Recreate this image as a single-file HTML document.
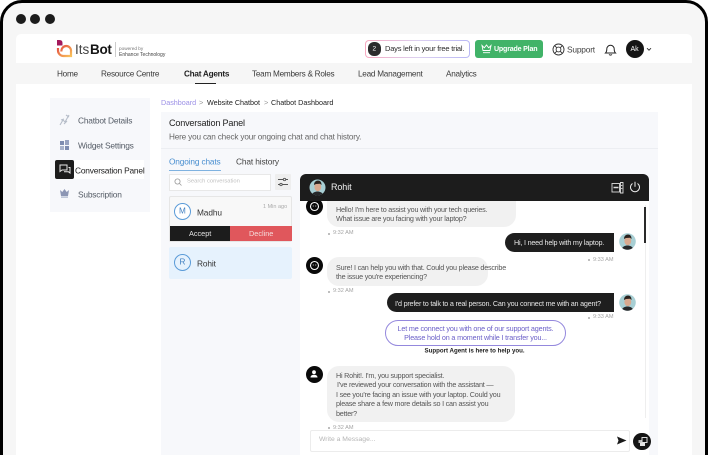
<!DOCTYPE html>
<html>
<head>
<meta charset="utf-8">
<style>
html,body{margin:0;padding:0;background:#fff;width:708px;height:455px;overflow:hidden}
#wrap{position:relative;width:708px;height:455px;overflow:hidden;font-family:"Liberation Sans",sans-serif;color:#222;filter:blur(.25px)}
.a{position:absolute}
.t{position:absolute;white-space:nowrap;line-height:1;transform:translateY(calc(-50% + .6px))}
#frame{left:0;top:0;width:702px;height:470px;border:3px solid #000;border-radius:22px;background:#f6f6f6}
.dot{width:10px;height:10px;border-radius:50%;background:#1c1c1c;top:14px}
.nav{font-size:8.2px;letter-spacing:-.25px;color:#3a3a3a;top:74px}
.side{font-size:8.4px;letter-spacing:-.2px;color:#555c66}
.msg{font-size:7.2px;letter-spacing:-.2px;color:#555}
.time{font-size:5.6px;color:#a5a5a5}
.tdot{width:2px;height:2px;border-radius:50%;background:#aaa}
</style>
</head>
<body>
<div id="wrap">
<div class="a" id="frame"></div>
<div class="a dot" style="left:16px"></div>
<div class="a dot" style="left:30px"></div>
<div class="a dot" style="left:45px"></div>

<div class="a" style="left:16px;top:34px;width:676px;height:421px;background:#fff;border-radius:5px 5px 0 0"></div>
<div class="a" style="left:16px;top:63px;width:676px;height:21px;background:#f6f6f6"></div>

<!-- logo -->
<svg class="a" style="left:56px;top:39px" width="17" height="19" viewBox="0 0 17 19">
<defs><linearGradient id="lg" x1="0" y1="0" x2="1" y2="1"><stop offset="0" stop-color="#e2483f"/><stop offset="1" stop-color="#f9c25a"/></linearGradient></defs>
<path d="M1 1h2.500q3 0 3 3v2.500H1z" fill="#a3195b"/>
<path d="M2 9v2.500a5.500 5.500 0 0 0 5.500 5.500H15V12.500a4.800 4.800 0 1 0-9.500 0" fill="none" stroke="url(#lg)" stroke-width="2.200"/>
</svg>
<div class="t" style="left:75px;top:49px;font-size:13.500px;color:#444">Its</div>
<div class="t" style="left:90px;top:49px;font-size:13.500px;color:#151515;font-weight:bold;letter-spacing:-.3px">Bot</div>
<div class="a" style="left:115px;top:42px;width:1px;height:15px;background:#ccc"></div>
<div class="t" style="left:119px;top:49px;font-size:4.700px;color:#777">powered by</div>
<div class="t" style="left:119px;top:55px;font-size:5px;color:#444">Enhance Technology</div>

<!-- trial -->
<div class="a" style="left:365px;top:40px;width:105px;height:18px;border-radius:4px;background:linear-gradient(90deg,#f7a8bf,#dcd0f0,#b9b8f5)"></div>
<div class="a" style="left:366px;top:41px;width:103px;height:16px;border-radius:3px;background:#fff"></div>
<div class="a" style="left:368px;top:42px;width:13px;height:14px;border-radius:6px;background:#2c2c2c"></div>
<div class="t" style="left:372.500px;top:48.500px;font-size:6.500px;color:#fff">2</div>
<div class="t" style="left:385px;top:48px;font-size:7.500px;letter-spacing:-.2px;color:#2b2b2b">Days left in your free trial.</div>

<!-- upgrade -->
<div class="a" style="left:475px;top:40px;width:68px;height:18px;border-radius:3px;background:#41b368"></div>
<svg class="a" style="left:481px;top:44px" width="11" height="10" viewBox="0 0 11 10" fill="none" stroke="#fff" stroke-width=".9"><path d="M1 1.500l2.300 2.300L5.500 1l2.200 2.800L10 1.500 9 6.500H2zM2 8.700h7"/></svg>
<div class="t" style="left:494px;top:48.500px;font-size:7.100px;letter-spacing:-.2px;color:#fff;font-weight:bold">Upgrade Plan</div>

<!-- support -->
<svg class="a" style="left:552px;top:43px" width="13" height="13" viewBox="0 0 13 13" fill="none" stroke="#333" stroke-width=".9"><circle cx="6.500" cy="6.500" r="5.500"/><circle cx="6.500" cy="6.500" r="2.400"/><path d="M2.600 2.600l2.200 2.200M10.400 2.600L8.200 4.800M2.600 10.400l2.200-2.200M10.400 10.400L8.200 8.200"/></svg>
<div class="t" style="left:567px;top:48.500px;font-size:8.400px;letter-spacing:-.2px;color:#444">Support</div>
<svg class="a" style="left:604px;top:43px" width="13" height="13" viewBox="0 0 13 13" fill="none" stroke="#222" stroke-width="1"><path d="M1.500 10h10c-1-1-1.300-2-1.300-4A3.700 3.700 0 0 0 2.800 6c0 2-.3 3-1.300 4zM5 11.500q1.500 1.200 3 0"/></svg>
<div class="a" style="left:626px;top:40px;width:18px;height:18px;border-radius:50%;background:#151515"></div>
<div class="t" style="left:630.500px;top:48.500px;font-size:7px;color:#fff">Ak</div>
<svg class="a" style="left:646px;top:47px" width="6" height="5" viewBox="0 0 6 5" fill="none" stroke="#333" stroke-width=".9"><path d="M1 1.200l2 2 2-2"/></svg>

<!-- nav -->
<div class="t nav" style="left:57px">Home</div>
<div class="t nav" style="left:101px">Resource Centre</div>
<div class="t nav" style="left:184px;color:#222;font-weight:bold;letter-spacing:-.25px">Chat Agents</div>
<div class="a" style="left:195px;top:83px;width:21px;height:1px;background:#222"></div>
<div class="t nav" style="left:252px">Team Members &amp; Roles</div>
<div class="t nav" style="left:358px">Lead Management</div>
<div class="t nav" style="left:446px">Analytics</div>

<!-- sidebar -->
<div class="a" style="left:50px;top:98px;width:100px;height:114px;background:#f7f8fb"></div>
<svg class="a" style="left:58px;top:113px" width="13" height="14" viewBox="0 0 13 14" fill="none" stroke="#b6bdc9" stroke-width="1.100"><path d="M2 12l3-5 2 2 4-7M3 7l3-1M8 2l3 2M6 11l3-3"/></svg>
<div class="t side" style="left:78px;top:120px">Chatbot Details</div>
<svg class="a" style="left:60px;top:140px" width="9" height="10" viewBox="0 0 9 10"><rect x="0" y="1" width="4" height="4" fill="#7f8db0"/><rect x="5" y="0" width="4" height="5" fill="#98a3c0"/><rect x="0" y="6" width="4" height="4" fill="#a9b3cb"/><rect x="5" y="6" width="4" height="4" fill="#7f8db0"/></svg>
<div class="t side" style="left:78px;top:145px">Widget Settings</div>
<div class="a" style="left:74px;top:160px;width:70px;height:19px;background:#fff"></div>
<div class="a" style="left:55px;top:160px;width:19px;height:18.500px;background:#1c1c1c;border-radius:2px"></div>
<svg class="a" style="left:59px;top:164px" width="12" height="11" viewBox="0 0 12 11" fill="none" stroke="#e8e8e8" stroke-width="1"><path d="M1 1h7v5H3L1 7.500zM9.500 3.500H11v5.500l-1.500-1.200H5"/></svg>
<div class="t" style="left:75px;top:169.500px;font-size:8.400px;letter-spacing:-.2px;color:#222">Conversation Panel</div>
<svg class="a" style="left:60px;top:189px" width="9" height="9" viewBox="0 0 9 9"><path d="M0 1l2.300 2L4.500 0l2.200 3L9 1 8 7H1z" fill="#8c96b4"/><rect x="1" y="7.500" width="7" height="1.200" fill="#a9b3cb"/></svg>
<div class="t side" style="left:78px;top:194px">Subscription</div>

<!-- breadcrumb -->
<div class="t" style="left:161px;top:102px;font-size:7.200px;color:#9c90e6">Dashboard</div>
<div class="t" style="left:199px;top:102px;font-size:7.500px;color:#999">&gt;</div>
<div class="t" style="left:207px;top:102px;font-size:7.200px;color:#222">Website Chatbot</div>
<div class="t" style="left:264px;top:102px;font-size:7.500px;color:#999">&gt;</div>
<div class="t" style="left:271px;top:102px;font-size:7.200px;color:#222">Chatbot Dashboard</div>

<!-- main panel -->
<div class="a" style="left:161px;top:112px;width:497px;height:343px;background:#f7f8fb"></div>
<div class="a" style="left:161px;top:148px;width:497px;height:1px;background:#eceef2"></div>
<div class="t" style="left:169px;top:123px;font-size:9.100px;letter-spacing:-.2px;color:#222">Conversation Panel</div>
<div class="t" style="left:169px;top:137px;font-size:8.200px;letter-spacing:-.17px;color:#666">Here you can check your ongoing chat and chat history.</div>
<div class="t" style="left:169px;top:161px;font-size:8.300px;letter-spacing:-.15px;color:#4a8fd0">Ongoing chats</div>
<div class="a" style="left:169px;top:170px;width:52px;height:1px;background:#7fb2e0"></div>
<div class="t" style="left:236px;top:161px;font-size:8.400px;letter-spacing:-.15px;color:#444">Chat history</div>

<!-- search -->
<div class="a" style="left:169px;top:174px;width:100px;height:15px;background:#fff;border:1px solid #e8e8e8"></div>
<svg class="a" style="left:174px;top:178px" width="8" height="8" viewBox="0 0 8 8" fill="none" stroke="#999" stroke-width=".8"><circle cx="3.500" cy="3.500" r="2.600"/><path d="M5.500 5.500L7.500 7.500"/></svg>
<div class="t" style="left:187px;top:181.500px;font-size:5.800px;color:#c0c0c0">Search conversation</div>
<div class="a" style="left:275px;top:174px;width:16px;height:16px;background:#eeeeee;border-radius:1px"></div>
<svg class="a" style="left:277px;top:177px" width="12" height="10" viewBox="0 0 12 10" fill="none" stroke="#555" stroke-width=".9"><path d="M1 2.500h10M1 7.500h10"/><circle cx="7.500" cy="2.500" r="1.200" fill="#eee"/><circle cx="4" cy="7.500" r="1.200" fill="#eee"/></svg>

<!-- Madhu -->
<div class="a" style="left:169px;top:196px;width:121px;height:44px;background:#f8f8f8;border:1px solid #e6e6e6;border-radius:2px"></div>
<div class="a" style="left:174px;top:203px;width:15px;height:15px;border:1px solid #5a9bd8;border-radius:50%;background:#fff"></div>
<div class="t" style="left:179px;top:211px;font-size:8.200px;color:#3f7fc0">M</div>
<div class="t" style="left:197px;top:212px;font-size:8.300px;letter-spacing:-.1px;color:#333">Madhu</div>
<div class="t" style="left:263px;top:206.500px;font-size:5.500px;color:#aaa">1 Min ago</div>
<div class="a" style="left:170px;top:226px;width:60px;height:14.500px;background:#1c1c1c"></div>
<div class="a" style="left:230px;top:226px;width:61.500px;height:14.500px;background:#e0575c"></div>
<div class="t" style="left:189px;top:233px;font-size:7.300px;color:#e4e4e4">Accept</div>
<div class="t" style="left:249px;top:233px;font-size:7.300px;color:#f5dcdc">Decline</div>

<!-- Rohit -->
<div class="a" style="left:169px;top:247px;width:123px;height:32px;background:#e6f2fd;border-radius:2px"></div>
<div class="a" style="left:174px;top:254px;width:15px;height:15px;border:1px solid #5a9bd8;border-radius:50%"></div>
<div class="t" style="left:179.500px;top:261.500px;font-size:8.200px;color:#3f7fc0">R</div>
<div class="t" style="left:197px;top:262.500px;font-size:8.300px;letter-spacing:-.1px;color:#333">Rohit</div>

<!-- chat -->
<div class="a" style="left:300px;top:174px;width:349px;height:281px;background:#fff;border-radius:6px 6px 0 0;overflow:hidden">
  <div class="a" style="left:344.500px;top:31px;width:1.500px;height:213px;background:#eeeeee"></div>
  <div class="a" style="left:344px;top:33px;width:2px;height:36px;background:#2a2a2a"></div>

  <!-- bot 1 -->
  <div class="a" style="left:27px;top:18px;width:189px;height:35px;background:#f1f1f1;border-radius:0 0 12px 12px"></div>
  <div class="t msg" style="left:36px;top:34.500px">Hello! I'm here to assist you with your tech queries.</div>
  <div class="t msg" style="left:36px;top:43.500px">What issue are you facing with your laptop?</div>
  <svg class="a" style="left:5.500px;top:24px" width="17" height="17" viewBox="0 0 17 17"><circle cx="8.500" cy="8.500" r="8.500" fill="#0a0a0a"/><circle cx="8.500" cy="8.500" r="4" fill="none" stroke="#fff" stroke-width="1.100"/><path d="M6.800 8h.8M9.400 8h.8" stroke="#fff" stroke-width=".9"/></svg>
  <div class="a tdot" style="left:28px;top:58.500px"></div>
  <div class="t time" style="left:33px;top:59px">9:32 AM</div>

  <!-- user 1 -->
  <div class="a" style="left:205px;top:59px;width:109px;height:19px;background:#1e1e1e;border-radius:10px 0 0 10px"></div>
  <div class="t msg" style="left:214px;top:68px;color:#e6e6e6">Hi, I need help with my laptop.</div>
  <div class="a tdot" style="left:288px;top:85px"></div>
  <div class="t time" style="left:293px;top:85.500px">9:33 AM</div>

  <!-- bot 2 -->
  <div class="a" style="left:27px;top:83px;width:161px;height:29px;background:#f1f1f1;border-radius:12px"></div>
  <div class="t msg" style="left:36px;top:93px">Sure! I can help you with that. Could you please describe</div>
  <div class="t msg" style="left:36px;top:102px">the issue you're experiencing?</div>
  <svg class="a" style="left:5.500px;top:83px" width="17" height="17" viewBox="0 0 17 17"><circle cx="8.500" cy="8.500" r="8.500" fill="#0a0a0a"/><circle cx="8.500" cy="8.500" r="4" fill="none" stroke="#fff" stroke-width="1.100"/><path d="M6.800 8h.8M9.400 8h.8" stroke="#fff" stroke-width=".9"/></svg>
  <div class="a tdot" style="left:28px;top:116.500px"></div>
  <div class="t time" style="left:33px;top:117px">9:32 AM</div>

  <!-- user 2 -->
  <div class="a" style="left:87px;top:119px;width:227px;height:19px;background:#1e1e1e;border-radius:10px 0 0 10px"></div>
  <div class="t msg" style="left:95px;top:128.500px;color:#e6e6e6">I'd prefer to talk to a real person. Can you connect me with an agent?</div>
  <div class="a tdot" style="left:288px;top:142.500px"></div>
  <div class="t time" style="left:293px;top:143px">9:33 AM</div>

  <!-- purple -->
  <div class="a" style="left:85px;top:146px;width:179px;height:23.500px;border:1px solid #9488dd;border-radius:13px"></div>
  <div class="t" style="left:85px;width:181px;text-align:center;top:154px;font-size:7.200px;letter-spacing:-.15px;color:#6b60c8">Let me connect you with one of our support agents.</div>
  <div class="t" style="left:85px;width:181px;text-align:center;top:163px;font-size:7.200px;letter-spacing:-.15px;color:#6b60c8">Please hold on a moment while I transfer you...</div>
  <div class="t" style="left:124.500px;top:177px;font-size:6.150px;font-weight:bold;color:#1c1c1c">Support Agent is here to help you.</div>

  <!-- agent -->
  <div class="a" style="left:27px;top:192px;width:188px;height:56px;background:#f1f1f1;border-radius:12px"></div>
  <div class="a" style="left:5.500px;top:191.500px;width:17px;height:17px;border-radius:50%;background:#0a0a0a"></div>
  <svg class="a" style="left:9px;top:195px" width="10" height="10" viewBox="0 0 10 10" fill="#fff"><circle cx="5" cy="3.200" r="1.900"/><path d="M1.500 8.500c0-2 1.700-2.800 3.500-2.800s3.500.8 3.500 2.800z"/></svg>
  <div class="t msg" style="left:36px;top:201px">Hi Rohit!. I'm, you support specialist.</div>
  <div class="t msg" style="left:37px;top:210px">I've reviewed your conversation with the assistant —</div>
  <div class="t msg" style="left:36px;top:220px">I see you're facing an issue with your laptop. Could you</div>
  <div class="t msg" style="left:36px;top:229px">please share a few more details so I can assist you</div>
  <div class="t msg" style="left:36px;top:238.500px">better?</div>
  <div class="a tdot" style="left:28px;top:253px"></div>
  <div class="t time" style="left:33px;top:253.500px">9:32 AM</div>

  <!-- input -->
  <div class="a" style="left:0;top:256px;width:349px;height:25px;background:#fff"></div>
  <div class="a" style="left:10px;top:256px;width:318px;height:20px;background:#fff;border:1px solid #ececec;border-radius:2px"></div>
  <div class="t" style="left:19px;top:266px;font-size:6.800px;color:#b5b5b5">Write a Message...</div>
  <svg class="a" style="left:316px;top:262px" width="11" height="9" viewBox="0 0 11 9"><path d="M1 0.500L10.500 4.500 1 8.500 2.500 4.500z" fill="#1a1a1a"/></svg>
</div>

<!-- attach button -->
<div class="a" style="left:633px;top:432.500px;width:17.500px;height:17.500px;border-radius:50%;background:#151515"></div>
<svg class="a" style="left:636.500px;top:436px" width="11" height="11" viewBox="0 0 11 11"><rect x="5" y="1.500" width="5" height="5" fill="none" stroke="#ddd" stroke-width="1"/><rect x="1.500" y="4" width="3" height="3" fill="#bbb"/><rect x="3" y="6.500" width="5" height="3.500" fill="#e5e5e5"/></svg>

<!-- header of chat -->
<div class="a" style="left:300px;top:174px;width:349px;height:27px;background:#1c1c1c;border-radius:6px 6px 0 0"></div>
<svg class="a" style="left:309px;top:179px" width="17" height="17" viewBox="0 0 17 17"><defs><clipPath id="c1"><circle cx="8.500" cy="8.500" r="8"/></clipPath></defs><g clip-path="url(#c1)"><rect width="17" height="17" fill="#a8cfd4"/><ellipse cx="8.800" cy="8" rx="3.400" ry="4.200" fill="#d9a98f"/><path d="M5 6c0-3 2-4.500 4-4.500s3.700 1.500 3.500 4.500L11 4.800 7 5z" fill="#2a221e"/><path d="M2.500 17c.5-3.500 3.500-4.500 6-4.500s5.500 1 6 4.500z" fill="#26282a"/></g></svg>
<div class="t" style="left:331px;top:187px;font-size:9px;letter-spacing:-.1px;color:#f0f0f0">Rohit</div>
<svg class="a" style="left:611px;top:181px" width="13" height="13" viewBox="0 0 13 13" fill="none" stroke="#ddd" stroke-width=".9"><rect x="1" y="2.500" width="7.500" height="8.500"/><path d="M2.500 6.500h5" stroke-width="1.500"/><path d="M9.500 1.500h2.500v10.500H9.500z"/><path d="M10.700 4v1M10.700 7v1" stroke-width="1.100"/></svg>
<svg class="a" style="left:629px;top:181px" width="12" height="12" viewBox="0 0 12 12" fill="none" stroke="#f0f0f0" stroke-width="1"><path d="M3.500 2.500a4.500 4.500 0 1 0 5 0M6 .8v5"/></svg>

<!-- user avatars -->
<svg class="a" style="left:619px;top:233px" width="17" height="17" viewBox="0 0 17 17"><defs><clipPath id="c2"><circle cx="8.500" cy="8.500" r="8.300"/></clipPath></defs><g clip-path="url(#c2)"><rect width="17" height="17" fill="#a8cfd4"/><ellipse cx="8.800" cy="8" rx="3.400" ry="4.200" fill="#d9a98f"/><path d="M5 6c0-3 2-4.500 4-4.500s3.700 1.500 3.500 4.500L11 4.800 7 5z" fill="#2a221e"/><path d="M2.500 17c.5-3.500 3.500-4.500 6-4.500s5.500 1 6 4.500z" fill="#26282a"/></g></svg>
<svg class="a" style="left:619px;top:294px" width="17" height="17" viewBox="0 0 17 17"><g clip-path="url(#c2)"><rect width="17" height="17" fill="#a8cfd4"/><ellipse cx="8.800" cy="8" rx="3.400" ry="4.200" fill="#d9a98f"/><path d="M5 6c0-3 2-4.500 4-4.500s3.700 1.500 3.500 4.500L11 4.800 7 5z" fill="#2a221e"/><path d="M2.500 17c.5-3.500 3.500-4.500 6-4.500s5.500 1 6 4.500z" fill="#26282a"/></g></svg>
</div>
</body>
</html>
